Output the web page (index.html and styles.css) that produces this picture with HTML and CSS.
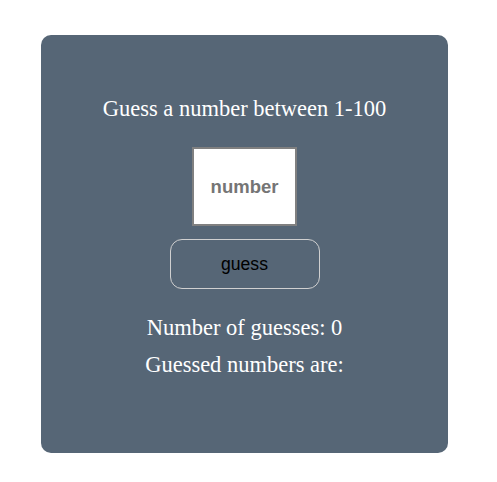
FILE: index.html
```html
<!DOCTYPE html>
<html>
<head>
<meta charset="utf-8">
<link rel="stylesheet" href="styles.css">
</head>
<body>
<div class="card">
  <p class="title">Guess a number between 1-100</p>
  <input class="num" type="text" placeholder="number">
  <button class="guess">guess</button>
  <p class="info">Number of guesses: 0</p>
  <p class="info">Guessed numbers are:</p>
</div>
</body>
</html>
```
FILE: styles.css
```css
html, body {
  margin: 0;
  background: #ffffff;
}
body {
  padding: 35px 0 0 41px;
}
.card {
  width: 407px;
  height: 418px;
  box-sizing: border-box;
  background: #566676;
  border-radius: 10px;
  display: flex;
  flex-direction: column;
  align-items: center;
  padding-top: 61px;
  font-family: "Liberation Serif", serif;
  color: #ffffff;
}
.title {
  margin: 0;
  font-size: 22.5px;
  line-height: 26px;
}
.num {
  margin-top: 25px;
  width: 105px;
  height: 79px;
  box-sizing: border-box;
  border: 2px solid #808080;
  background: #ffffff;
  text-align: center;
  font-family: "Liberation Sans", sans-serif;
  font-size: 18.5px;
  font-weight: bold;
  padding: 0;
  outline: none;
}
.num::placeholder {
  color: #757575;
  opacity: 1;
}
.guess {
  margin-top: 13px;
  width: 150px;
  height: 50px;
  box-sizing: border-box;
  border: 1px solid #d0d0d0;
  border-radius: 12px;
  background: transparent;
  font-family: "Liberation Sans", sans-serif;
  font-size: 17.6px;
  color: #000000;
}
.info {
  margin: 0;
  font-size: 22.5px;
  line-height: 26px;
}
.guess + .info {
  margin-top: 26px;
}
.info + .info {
  margin-top: 11px;
}
```
